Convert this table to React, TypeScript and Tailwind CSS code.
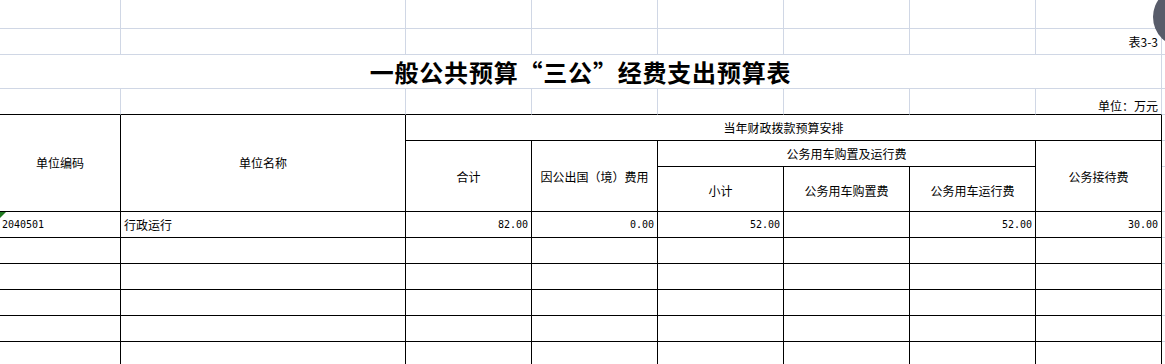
import React from "react";

const cjk = "font-['Noto_Sans_CJK_SC',sans-serif]";
const mono = "font-['DejaVu_Sans_Mono','Liberation_Mono',monospace]";

// plain spreadsheet cell above the table
function Grid({ children, className = "" }: { children?: React.ReactNode; className?: string }) {
  return <div className={`border-r border-b border-[#d0d7e5] ${className}`}>{children}</div>;
}

// table cell with black rule
function Cell({
  children,
  className = "",
  num = false,
}: {
  children?: React.ReactNode;
  className?: string;
  num?: boolean;
}) {
  return (
    <div
      className={`border-r border-b border-black flex items-center leading-none text-black ${
        num ? `${mono} text-[10px]` : `${cjk} text-[12px]`
      } ${className}`}
    >
      {children}
    </div>
  );
}

// the strip past the table's right edge
function Edge() {
  return <div className="border-b border-[#d0d7e5]" />;
}

const rows = [
  ["2040501", "行政运行", "82.00", "0.00", "52.00", "", "52.00", "30.00"],
  ["", "", "", "", "", "", "", ""],
  ["", "", "", "", "", "", "", ""],
  ["", "", "", "", "", "", "", ""],
  ["", "", "", "", "", "", "", ""],
  ["", "", "", "", "", "", "", ""],
];

export default function App() {
  return (
    <div className="relative w-full h-[364px] overflow-hidden bg-white">
      <div className="grid grid-cols-[121px_285px_126px_126px_126px_126px_126px_126px_1fr] grid-rows-[29px_26px_34px_26px_26px_26px_45px_26px_26px_26px_26px_26px_26px]">
        {/* row 1 */}
        {Array.from({ length: 8 }).map((_, i) => (
          <Grid key={"a" + i} />
        ))}
        <Edge />

        {/* row 2 */}
        {Array.from({ length: 7 }).map((_, i) => (
          <Grid key={"b" + i} />
        ))}
        <Grid className={`flex items-end justify-end pr-[3px] pb-[6px] text-[12px] leading-none text-black ${cjk}`}>表3-3</Grid>
        <Edge />

        {/* title */}
        <Grid className={`col-span-8 flex items-center justify-center text-[24px] font-bold leading-none tracking-[0.8px] text-black ${cjk}`}>
          一般公共预算“三公”经费支出预算表
        </Grid>
        <Edge />

        {/* unit row */}
        {Array.from({ length: 7 }).map((_, i) => (
          <div key={"c" + i} className="border-r border-[#d0d7e5] border-b border-b-black" />
        ))}
        <div className={`border-r border-[#d0d7e5] border-b border-b-black flex items-end justify-end pr-[3px] pb-[2px] text-[12px] leading-none text-black ${cjk}`}>
          单位：万元
        </div>
        <Edge />

        {/* header */}
        <Cell className="row-span-3 justify-center">单位编码</Cell>
        <Cell className="row-span-3 justify-center">单位名称</Cell>
        <Cell className="col-span-6 justify-center">当年财政拨款预算安排</Cell>
        <Edge />

        <Cell className="row-span-2 justify-center pt-[2px]">合计</Cell>
        <Cell className="row-span-2 justify-center pt-[2px]">因公出国（境）费用</Cell>
        <Cell className="col-span-3 justify-center">公务用车购置及运行费</Cell>
        <Cell className="row-span-2 justify-center pt-[2px]">公务接待费</Cell>
        <Edge />

        <Cell className="justify-center pt-[3px]">小计</Cell>
        <Cell className="justify-center pt-[3px]">公务用车购置费</Cell>
        <Cell className="justify-center pt-[3px]">公务用车运行费</Cell>
        <Edge />

        {/* data */}
        {rows.map((r, ri) => (
          <React.Fragment key={ri}>
            <Cell num className="relative pl-[2px] pt-[1px]">
              {ri === 0 && (
                <svg className="absolute left-0 top-0" width="6" height="6" viewBox="0 0 6 6">
                  <polygon points="0,0 6,0 0,6" fill="#217a21" />
                </svg>
              )}
              {r[0]}
            </Cell>
            <Cell className="pl-[3px] pt-[1px]">{r[1]}</Cell>
            {r.slice(2).map((v, ci) => (
              <Cell num key={ci} className="justify-end pr-[3px] pt-[1px]">
                {v}
              </Cell>
            ))}
            <Edge />
          </React.Fragment>
        ))}
      </div>

      {/* floating round button at top-right */}
      <div className="absolute left-[1153px] top-[-13px] w-[60px] h-[60px] rounded-full bg-[#585c6a]" />
    </div>
  );
}
